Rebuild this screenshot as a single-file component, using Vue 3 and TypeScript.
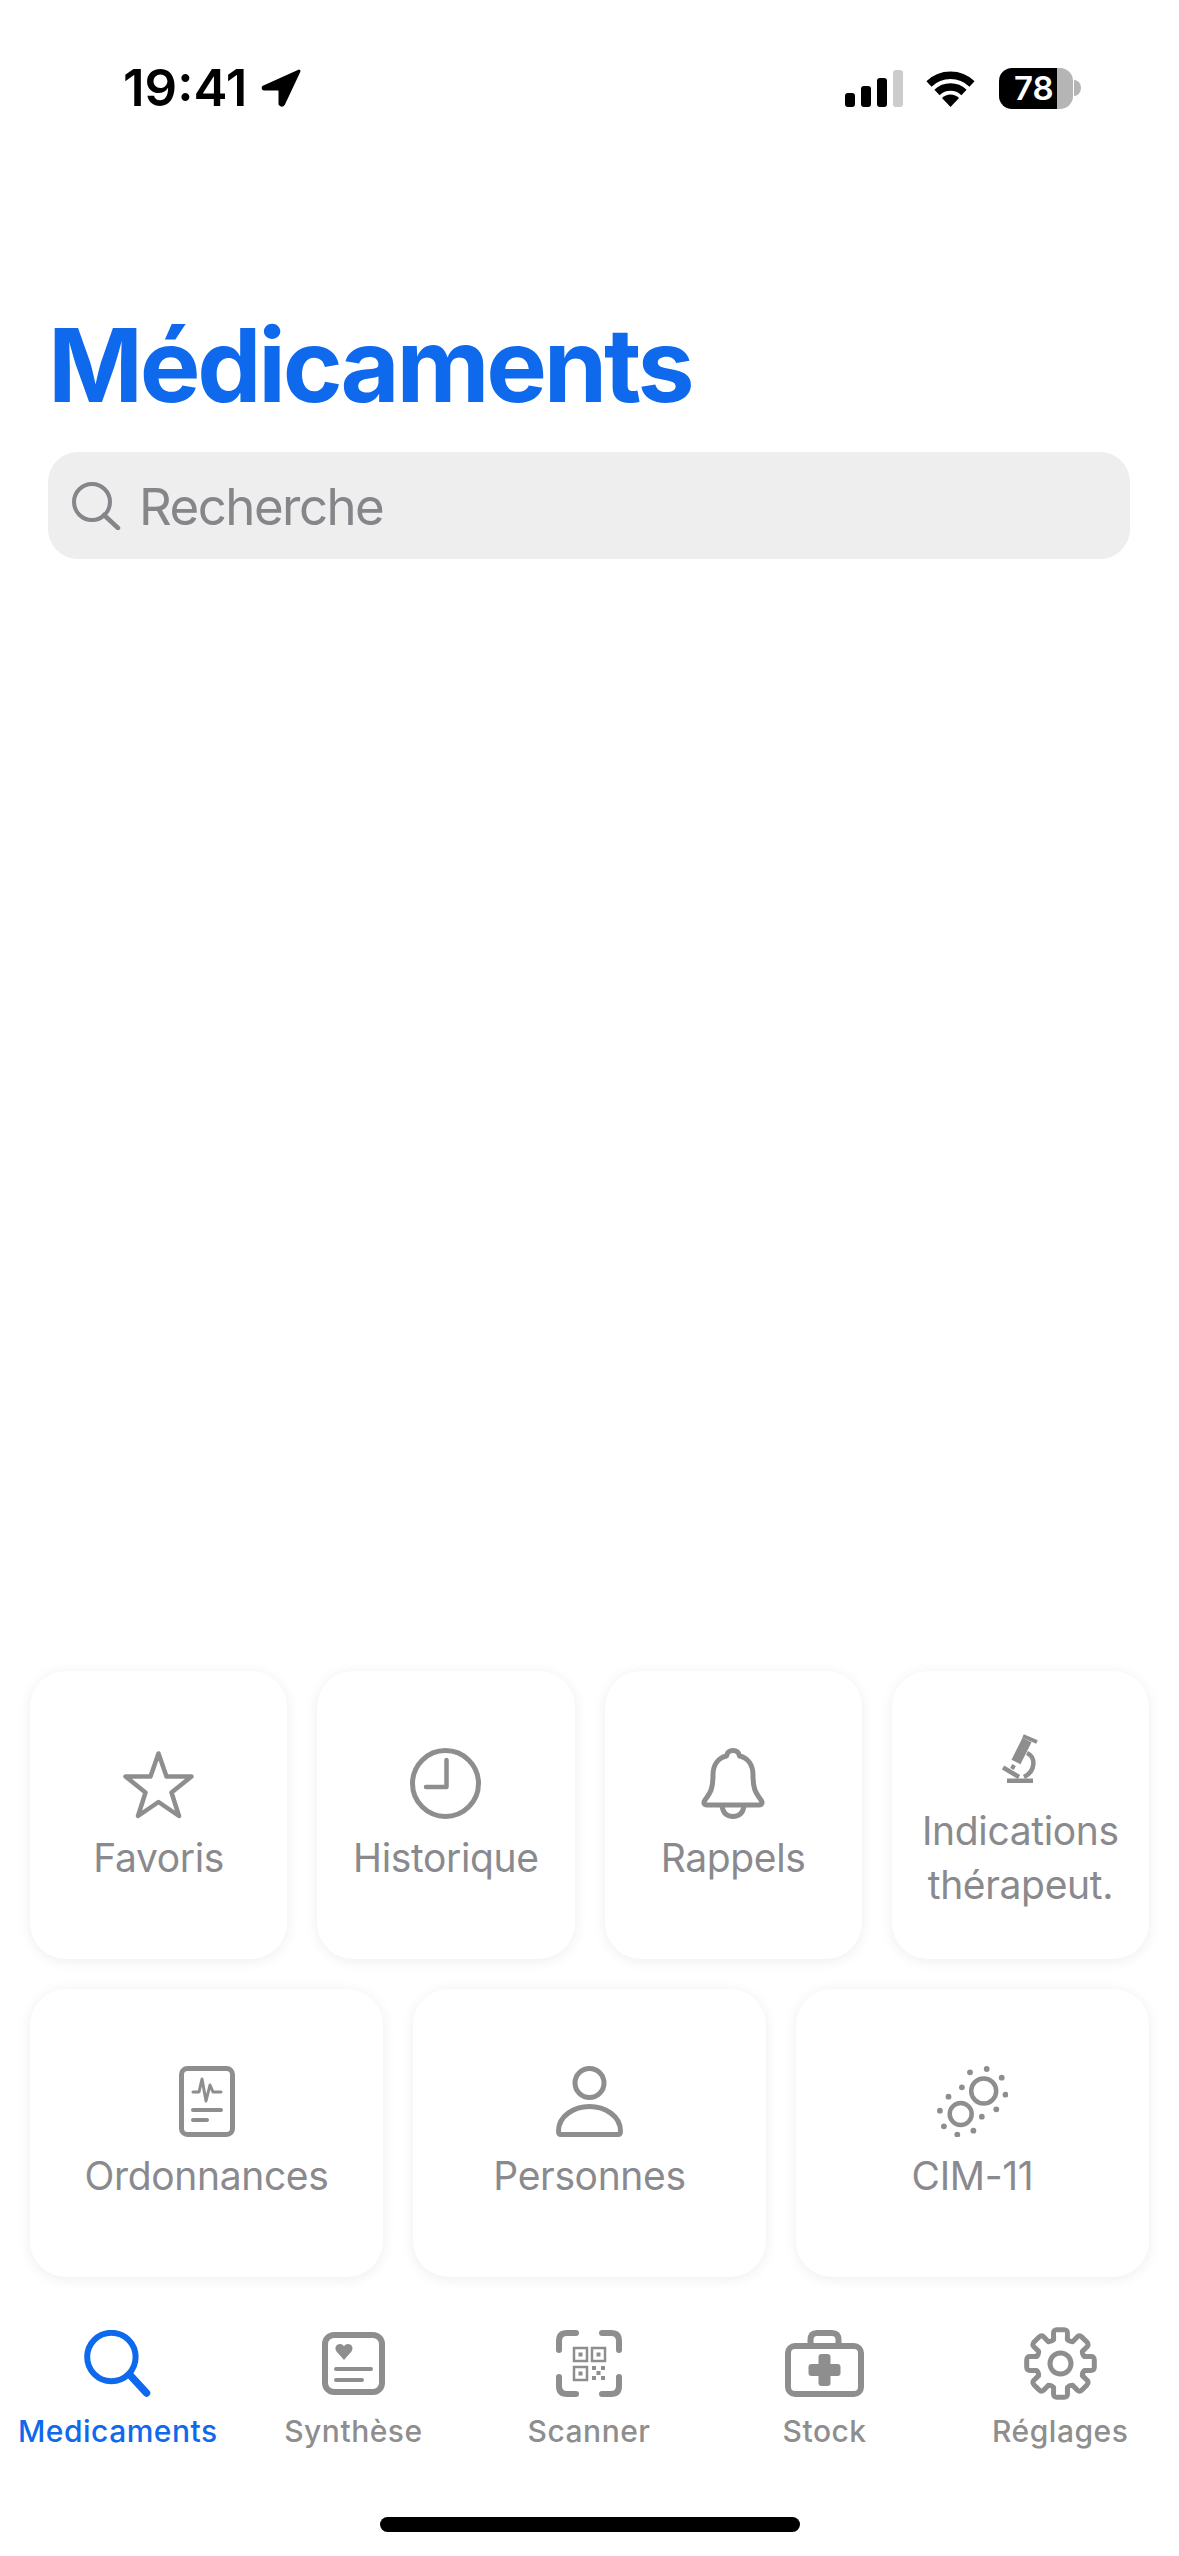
<script setup lang="ts">
const gearPath = (() => {
  const c = 36.5
  const pt = (r: number, deg: number) => {
    const t = (deg * Math.PI) / 180
    return `${(c + r * Math.cos(t)).toFixed(2)} ${(c + r * Math.sin(t)).toFixed(2)}`
  }
  let d = ''
  for (let i = 0; i < 8; i++) {
    const a = i * 45 - 90
    d += `${i === 0 ? 'M' : 'Q' + pt(23.5, a - 22.5) + ' '}${pt(25, a - 16)} L${pt(31, a - 13)} Q${pt(34.5, a - 12)} ${pt(34, a - 6)} L${pt(34, a + 6)} Q${pt(34.5, a + 12)} ${pt(31, a + 13)} L${pt(25, a + 16)} `
  }
  return d + `Q${pt(23.5, -112.5)} ${pt(25, -106)} Z`
})()

const dots: [number, number][] = [
  [49.7, 3], [33, 6.3], [64.7, 11.7], [24.9, 21.3], [68.5, 28.7], [11.5, 30.7],
  [59.3, 43.3], [2.9, 44.7], [44.8, 50.7], [6.9, 60.3], [36.4, 64.7], [20.3, 68.7],
]
</script>

<template>
  <div class="screen">
    <header class="status">
      <div class="status-left">
        <span class="clock">19:41</span>
        <svg class="arrow" viewBox="0 0 40 38" width="40" height="38">
          <path d="M38 2 L2.5 18 Q1.5 20 3.5 20 H19 V35 Q21 37.5 22.5 35 Z" fill="#000" stroke="#000" stroke-width="3" stroke-linejoin="round" />
        </svg>
      </div>
      <div class="status-right">
        <svg viewBox="0 0 58 37" width="58" height="37">
          <rect x="0" y="23" width="10" height="14" rx="3" fill="#000" />
          <rect x="16" y="16" width="10" height="21" rx="3" fill="#000" />
          <rect x="32" y="8" width="10" height="29" rx="3" fill="#000" />
          <rect x="48" y="0" width="10" height="37" rx="3" fill="#ccc" />
        </svg>
        <svg class="wifi" viewBox="0 0 51 37" width="51" height="37">
          <path d="M4 14 A31 31 0 0 1 47 14" fill="none" stroke="#000" stroke-width="7.5" />
          <path d="M12 22.5 A19.5 19.5 0 0 1 39 22.5" fill="none" stroke="#000" stroke-width="7.5" />
          <path d="M25.5 37 L17 28 A12 12 0 0 1 34 28 Z" fill="#000" />
        </svg>
        <div class="battery">
          <div class="battery-body"><span>78</span></div>
          <svg class="battery-nub" viewBox="0 0 7 16" width="7" height="16">
            <path d="M0 0 A7 8 0 0 1 0 16 Z" fill="#b5b5b5" />
          </svg>
        </div>
      </div>
    </header>

    <h1 class="title">Médicaments</h1>

    <div class="search">
      <svg viewBox="0 0 49 48" width="49" height="48">
        <circle cx="20" cy="20" r="18" fill="none" stroke="#85858a" stroke-width="4" />
        <path d="M32 33 L46 46" fill="none" stroke="#85858a" stroke-width="4.5" stroke-linecap="round" />
      </svg>
      <span class="search-text">Recherche</span>
    </div>

    <div class="spacer"></div>

    <section class="grid grid-four">
      <div class="card">
        <svg class="ico" viewBox="0 0 71 71" width="71" height="71">
          <path d="M35.5 5.5 L43.5 28.5 H68.5 L48.5 44.5 L56 68 L35.5 54 L15 68 L22.5 44.5 L2.5 28.5 H27.5 Z" fill="none" stroke="#8e8e8e" stroke-width="4.5" stroke-linejoin="round" />
        </svg>
        <span class="label">Favoris</span>
      </div>
      <div class="card">
        <svg class="ico" viewBox="0 0 71 71" width="71" height="71">
          <circle cx="35.5" cy="35.5" r="33" fill="none" stroke="#8e8e8e" stroke-width="5" />
          <path d="M36.5 12 V39 H16" fill="none" stroke="#8e8e8e" stroke-width="4.5" stroke-linecap="round" stroke-linejoin="round" />
        </svg>
        <span class="label">Historique</span>
      </div>
      <div class="card">
        <svg class="ico" viewBox="0 0 64 71" width="64" height="71">
          <path d="M32 2.5 C36 2.5 38 5 38.5 8 C47 10 52 17 52 27 C52 40 54 44 60 52 C62 55 61 57 58 57 H6 C3 57 2 55 4 52 C10 44 12 40 12 27 C12 17 17 10 25.5 8 C26 5 28 2.5 32 2.5 Z" fill="none" stroke="#8e8e8e" stroke-width="5" stroke-linejoin="round" />
          <path d="M21 58 C22 65 26 68.5 32 68.5 C38 68.5 42 65 43 58" fill="none" stroke="#8e8e8e" stroke-width="5" />
        </svg>
        <span class="label">Rappels</span>
      </div>
      <div class="card">
        <svg class="ico ico-micro" viewBox="0 0 36 49" width="36" height="49">
          <g fill="none" stroke="#8e8e8e">
            <path d="M25 6 L14 28" stroke-width="10" />
            <path d="M21 2 L35 8" stroke-width="4" />
            <path d="M12 31 L10 35" stroke-width="4" />
            <path d="M25 19 C34 23 34 37 22 43" stroke-width="4.5" />
            <path d="M1 33.5 L17 43" stroke-width="4.5" />
          </g>
          <rect x="5" y="44.5" width="26" height="4.5" fill="#8e8e8e" />
        </svg>
        <span class="label">Indications thérapeut.</span>
      </div>
    </section>

    <section class="grid grid-three">
      <div class="card">
        <svg class="ico" viewBox="0 0 56 71" width="56" height="71">
          <rect x="2.5" y="2.5" width="51" height="66" rx="6" fill="none" stroke="#8e8e8e" stroke-width="5" />
          <path d="M14 26 H20 L23 13 L27 35 L31 19 L34 26 H42" fill="none" stroke="#8e8e8e" stroke-width="3" stroke-linejoin="round" stroke-linecap="round" />
          <path d="M14 44 H42 M14 54 H28" fill="none" stroke="#8e8e8e" stroke-width="4" stroke-linecap="round" />
        </svg>
        <span class="label">Ordonnances</span>
      </div>
      <div class="card">
        <svg class="ico" viewBox="0 0 67 71" width="67" height="71">
          <circle cx="33.5" cy="17" r="14.5" fill="none" stroke="#8e8e8e" stroke-width="5" />
          <path d="M2.5 65 C2.5 50 18 40.5 33.5 40.5 C49 40.5 64.5 50 64.5 65 C64.5 67.5 64 68.5 62 68.5 H5 C3 68.5 2.5 67.5 2.5 65 Z" fill="none" stroke="#8e8e8e" stroke-width="5" />
        </svg>
        <span class="label">Personnes</span>
      </div>
      <div class="card">
        <svg class="ico" viewBox="0 0 71 71" width="71" height="71">
          <circle cx="46.7" cy="25" r="12.5" fill="none" stroke="#8e8e8e" stroke-width="4.5" />
          <circle cx="23.7" cy="48" r="11" fill="none" stroke="#8e8e8e" stroke-width="4.5" />
          <circle v-for="(d, i) in dots" :key="i" :cx="d[0]" :cy="d[1]" r="2.9" fill="#8e8e8e" />
        </svg>
        <span class="label">CIM-11</span>
      </div>
    </section>

    <nav class="tabs">
      <div class="tab tab-active">
        <span class="tab-ico">
          <svg viewBox="0 0 67 67" width="67" height="67">
            <circle cx="27.4" cy="27" r="24.2" fill="none" stroke="#0f69ec" stroke-width="6" />
            <path d="M45.5 44.5 L62.5 63" fill="none" stroke="#0f69ec" stroke-width="7.5" stroke-linecap="round" />
          </svg>
        </span>
        <span class="tab-label">Medicaments</span>
      </div>
      <div class="tab">
        <span class="tab-ico">
          <svg viewBox="0 0 63 63" width="63" height="63">
            <rect x="3" y="3" width="57" height="57" rx="9" fill="none" stroke="#8e8e8e" stroke-width="6" />
            <path d="M22 28 L14.5 19.5 C12 15.5 14.5 12 18 12 C20 12 21.5 13 22 14.5 C22.5 13 24 12 26 12 C29.5 12 32 15.5 29.5 19.5 Z" fill="#8e8e8e" />
            <path d="M14 37 H49 M14 48 H40" fill="none" stroke="#8e8e8e" stroke-width="4" stroke-linecap="round" />
          </svg>
        </span>
        <span class="tab-label">Synthèse</span>
      </div>
      <div class="tab">
        <span class="tab-ico">
          <svg viewBox="0 0 66 67" width="66" height="67">
            <path d="M20 3 H11 Q3 3 3 11 V20 M46 3 H55 Q63 3 63 11 V20 M3 47 V56 Q3 64 11 64 H20 M63 47 V56 Q63 64 55 64 H46" fill="none" stroke="#8e8e8e" stroke-width="6" stroke-linecap="round" />
            <g fill="none" stroke="#8e8e8e" stroke-width="2.5">
              <rect x="18" y="18" width="13" height="13" />
              <rect x="36" y="18" width="13" height="13" />
              <rect x="18" y="37" width="13" height="13" />
            </g>
            <g fill="#8e8e8e">
              <rect x="22.5" y="22.5" width="4" height="4" />
              <rect x="40.5" y="22.5" width="4" height="4" />
              <rect x="22.5" y="41.5" width="4" height="4" />
              <rect x="36" y="36" width="4" height="4" />
              <rect x="45" y="36" width="4" height="4" />
              <rect x="40.5" y="41" width="4" height="4" />
              <rect x="36" y="46" width="4" height="4" />
              <rect x="45" y="46" width="4" height="4" />
            </g>
          </svg>
        </span>
        <span class="tab-label">Scanner</span>
      </div>
      <div class="tab">
        <span class="tab-ico">
          <svg viewBox="0 0 79 67" width="79" height="67">
            <rect x="3" y="16" width="73" height="48" rx="7" fill="none" stroke="#8e8e8e" stroke-width="6" />
            <path d="M25.5 14 V10 Q25.5 3 32 3 H47 Q53.5 3 53.5 10 V14" fill="none" stroke="#8e8e8e" stroke-width="6" />
            <rect x="33.5" y="24" width="12" height="32" rx="3" fill="#8e8e8e" />
            <rect x="23.5" y="34" width="32" height="12" rx="3" fill="#8e8e8e" />
          </svg>
        </span>
        <span class="tab-label">Stock</span>
      </div>
      <div class="tab">
        <span class="tab-ico">
          <svg viewBox="0 0 73 73" width="73" height="73">
            <path :d="gearPath" fill="none" stroke="#8e8e8e" stroke-width="5" stroke-linejoin="round" />
            <circle cx="36.5" cy="36.5" r="10.5" fill="none" stroke="#8e8e8e" stroke-width="5" />
          </svg>
        </span>
        <span class="tab-label">Réglages</span>
      </div>
    </nav>

    <div class="home"></div>
  </div>
</template>

<style scoped>
.screen {
  width: 1179px;
  height: 2556px;
  display: flex;
  flex-direction: column;
  background: #fff;
  font-family: Inter, "Liberation Sans", sans-serif;
  overflow: hidden;
}
.status {
  height: 176px;
  flex: none;
  display: flex;
  justify-content: space-between;
  align-items: center;
  padding: 0 98px 0 123px;
  box-sizing: border-box;
}
.status-left {
  display: flex;
  align-items: center;
  gap: 14px;
}
.clock {
  font-size: 51px;
  font-weight: 600;
  line-height: 60px;
  color: #000;
}
.status-right {
  display: flex;
  align-items: center;
}
.wifi {
  margin-left: 22px;
}
.battery {
  display: flex;
  align-items: center;
  margin-left: 23px;
  gap: 1px;
}
.battery-body {
  width: 74px;
  height: 41px;
  border-radius: 13px;
  background: linear-gradient(90deg, #000 58px, #b5b5b5 58px);
  color: #fff;
  font-size: 33px;
  font-weight: 600;
  line-height: 41px;
  padding-left: 15px;
  box-sizing: border-box;
}
.title {
  margin: 128px 0 0 48px;
  font-size: 102px;
  line-height: 122px;
  font-weight: 700;
  letter-spacing: -3.25px;
  color: #0f69ec;
}
.search {
  margin: 26px 49px 0 48px;
  height: 107px;
  flex: none;
  border-radius: 30px;
  background: #eeeeee;
  display: flex;
  align-items: center;
  padding-left: 24px;
  gap: 18px;
  font-size: 51px;
  letter-spacing: -1.55px;
  color: #85858a;
}
.search-text {
  padding-top: 2px;
}
.spacer {
  flex: 1;
}
.grid {
  display: grid;
  gap: 30px;
  padding: 0 30px;
}
.grid-four {
  grid-template-columns: repeat(4, 1fr);
}
.grid-three {
  grid-template-columns: repeat(3, 1fr);
  margin-top: 30px;
}
.card {
  height: 288px;
  border-radius: 36px;
  background: #fff;
  box-shadow: 0 2px 14px rgba(0, 0, 0, 0.07);
  display: flex;
  flex-direction: column;
  align-items: center;
  justify-content: center;
  padding-top: 3px;
  box-sizing: border-box;
  text-align: center;
}
.ico {
  display: block;
  margin-bottom: 12px;
}
.ico-micro {
  margin-top: 12px;
  margin-bottom: 21px;
}
.label {
  font-size: 39px;
  line-height: 54px;
  font-weight: 400;
  letter-spacing: -0.35px;
  color: #8a8a8e;
}
.tabs {
  display: grid;
  grid-template-columns: repeat(5, 1fr);
  margin-top: 50px;
  padding-right: 1px;
}
.tab {
  display: flex;
  flex-direction: column;
  align-items: center;
  white-space: nowrap;
}
.tab-ico {
  height: 73px;
  display: flex;
  align-items: center;
  margin-bottom: 13px;
}
.tab-label {
  font-size: 30px;
  line-height: 36px;
  font-weight: 500;
  letter-spacing: 0.5px;
  color: #8e8e8e;
}
.tab-active .tab-label {
  color: #0f69ec;
}
.home {
  width: 420px;
  height: 15px;
  flex: none;
  margin: 68px auto 24px;
  border-radius: 8px;
  background: #000;
}
</style>
